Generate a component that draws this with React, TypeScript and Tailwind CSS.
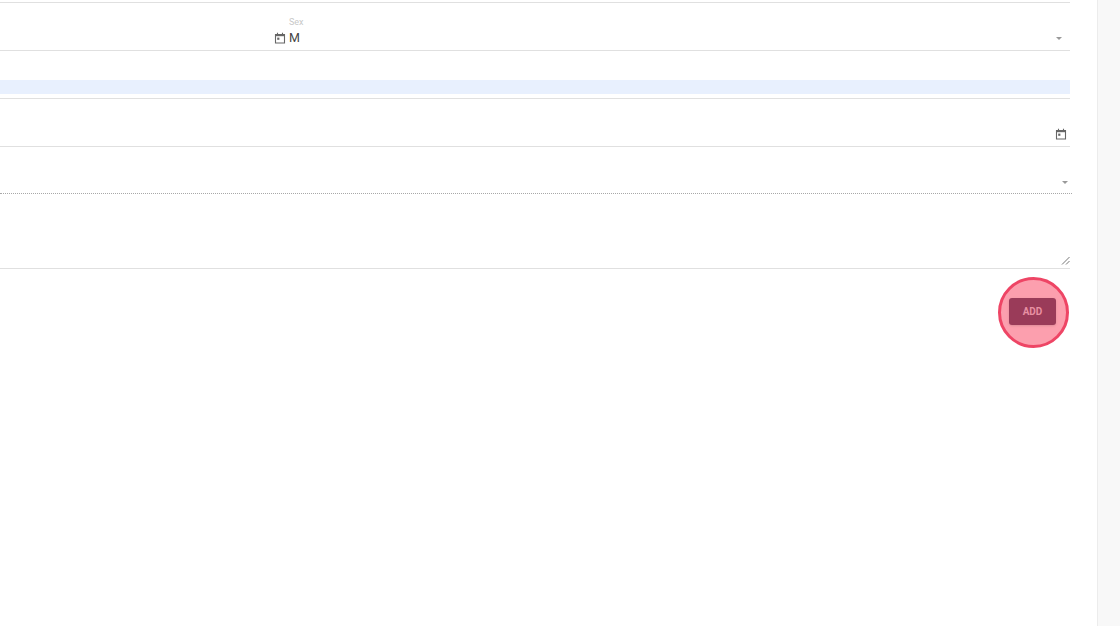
const CalendarIcon = () => (
  <svg width="12" height="12" viewBox="0 0 12 12" className="shrink-0 text-[#666]" fill="none">
    <path d="M1.5 2.5h9v8.5h-9z" stroke="currentColor" strokeWidth="1.1" />
    <path d="M1.5 2h9v2.2h-9z" fill="currentColor" />
    <path d="M3.5 0.8v1.6M8.5 0.8v1.6" stroke="currentColor" strokeWidth="1.1" />
    <rect x="3.2" y="5.6" width="2.2" height="2.2" fill="currentColor" />
  </svg>
);

const Caret = () => (
  <span className="h-0 w-0 border-x-[3.5px] border-t-[3.5px] border-x-transparent border-t-[#999]" />
);

const App = () => {
  return (
    <div className="flex h-[626px] w-[1120px] overflow-hidden bg-white font-['Roboto',sans-serif]">
      <main className="w-[1097px] shrink-0 bg-white pr-[27px]">
        <div className="h-[3px] border-b border-[#e0e0e0]" />

        <div className="flex h-[48px] border-b border-[#e0e0e0]">
          <div className="ml-[274px] flex flex-1 flex-col pt-[13px]">
            <span className="pl-[15px] text-[9px] leading-[12px] text-[#c8c8c8]">Sex</span>
            <div className="mt-[2px] flex items-center">
              <CalendarIcon />
              <span className="ml-[3px] text-[12.5px] leading-[15px] text-[#444]">M</span>
              <span className="ml-auto mr-[8px] mt-[2px] flex">
                <Caret />
              </span>
            </div>
          </div>
        </div>

        <div className="flex h-[48px] flex-col justify-end border-b border-[#e0e0e0] pb-[4px]">
          <div className="h-[14px] bg-[#e8f0fe]" />
        </div>

        <div className="flex h-[48px] items-end justify-end border-b border-[#e0e0e0] pb-[6px] pr-[3px]">
          <CalendarIcon />
        </div>

        <div className="-mr-[2px] flex h-[47px] items-end justify-end border-b border-dotted border-[#a8a8a8] pb-[9px] pr-[4px]">
          <Caret />
        </div>

        <div className="flex h-[75px] items-end justify-end border-b border-[#e0e0e0] pb-[3px]">
          <svg width="9" height="9" viewBox="0 0 9 9" className="text-[#777]" fill="none">
            <path d="M1 8.5 8.5 1M5 8.5 8.5 5" stroke="currentColor" strokeWidth="1" />
          </svg>
        </div>

        <div className="mr-[1px] mt-[8px] flex justify-end">
          <div className="flex h-[71px] w-[71px] items-center rounded-full border-[3px] border-[#ee4565] bg-[#fc9fae] pb-[2px] pl-[8px]">
            <button className="flex h-[27px] w-[47px] items-center justify-center rounded-[3px] bg-[#9a3b59] text-[10px] font-bold text-[#e890a2] shadow-sm">
              ADD
            </button>
          </div>
        </div>
      </main>
      <aside className="flex-1 border-l border-[#ececec] bg-[#f8f8f8]" />
    </div>
  );
};

export default App;
